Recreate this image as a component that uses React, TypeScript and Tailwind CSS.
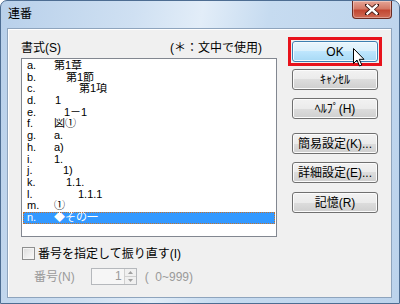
import React from 'react';

const rows = [
  { k: 'a.', t: '第1章', cls: 'pl-0' },
  { k: 'b.', t: '第1節', cls: 'pl-[12px]' },
  { k: 'c.', t: '第1項', cls: 'pl-[25px]' },
  { k: 'd.', t: '1', cls: 'pl-[1px]' },
  { k: 'e.', t: '1－1', cls: 'pl-[10px]' },
  { k: 'f.', t: '図①', cls: 'pl-0' },
  { k: 'g.', t: 'a.', cls: 'pl-0' },
  { k: 'h.', t: 'a)', cls: 'pl-0' },
  { k: 'i.', t: '1.', cls: 'pl-0' },
  { k: 'j.', t: '1)', cls: 'pl-[9px]' },
  { k: 'k.', t: '1.1.', cls: 'pl-[12px]' },
  { k: 'l.', t: '1.1.1', cls: 'pl-[24px]' },
  { k: 'm.', t: '①', cls: 'pl-0' },
  { k: 'n.', t: '◆その一', cls: 'pl-0' },
];

const btn =
  'w-[86px] h-[21px] flex items-center justify-center rounded-[3px] border border-[#707070] text-[12px] text-black shadow-[inset_0_0_0_1px_#fbfbfb] bg-[linear-gradient(#f2f2f2_0%,#ebebeb_50%,#dddddd_50%,#cfcfcf_100%)]';

const Cursor = () => (
  <svg width="12" height="19" viewBox="0 0 12 19" className="absolute left-[60px] top-[6px]">
    <path d="M0.5 0.5 L0.5 15.5 L4 12 L6.5 18 L8.8 17 L6.3 11.3 L11 11.3 Z" fill="#fff" stroke="#000" strokeWidth="1" strokeLinejoin="miter" />
  </svg>
);

export default function App() {
  return (
    <div className="w-[400px] h-[304px] flex flex-col overflow-hidden rounded-t-[7px] border border-[#4d6d92] bg-[linear-gradient(100deg,#b8d0ea_0%,#cfe0f2_30%,#e2edf8_45%,#c6dbf0_60%,#bcd3ec_100%)] font-['Liberation_Sans','Noto_Sans_CJK_JP',sans-serif]">
      {/* title bar */}
      <div className="h-[27px] flex items-start shrink-0">
        <div className="pl-[7px] pt-[5px] text-[12px] leading-[16px] text-black">連番</div>
        <div className="ml-auto mr-[7px] w-[40px] h-[18px] rounded-b-[4px] border border-t-0 border-[#6b2b22] bg-[linear-gradient(#e6a596_0%,#d47966_45%,#c24732_55%,#cf6b55_100%)] shadow-[inset_0_0_0_1px_rgba(255,255,255,0.35)] flex items-center justify-center">
          <svg width="14" height="11" viewBox="0 0 14 11">
            <path d="M2 1 L12 10 M12 1 L2 10" stroke="#3a1410" strokeWidth="4" strokeLinecap="square" />
            <path d="M2.5 1.5 L11.5 9.5 M11.5 1.5 L2.5 9.5" stroke="#fff" strokeWidth="2.4" strokeLinecap="square" />
          </svg>
        </div>
      </div>

      {/* client */}
      <div className="flex-1 ml-[6px] mr-[7px] mb-[5px] border border-[#8ea4bd] bg-[#f0f0f0] flex flex-col shadow-[inset_1px_1px_0_#ffffff]">
        <div className="flex pt-[8px]">
          {/* left column */}
          <div className="ml-[13px] w-[256px] flex flex-col">
            <div className="h-[21px] flex items-center justify-between pr-[15px] text-[12px] text-black">
              <span>書式(S)</span>
              <span>(＊：文中で使用)</span>
            </div>
            <div className="h-[179px] border border-[#828790] bg-white pt-[1px] px-[1px] text-[11px] text-black">
              {rows.map((r) => {
                const sel = r.k === 'n.';
                return (
                  <div
                    key={r.k}
                    className={`h-[11.7px] leading-[11.7px] flex overflow-hidden ${sel ? 'bg-[#3399ff] text-white outline outline-1 outline-dotted outline-[#c8722a] -outline-offset-1' : ''}`}
                  >
                    <span className="w-[31px] pl-[4px] shrink-0">{r.k}</span>
                    <span className={`whitespace-pre ${r.cls}`}>{r.t}</span>
                  </div>
                );
              })}
            </div>
            <div className="mt-[10px] h-[13px] flex items-center text-[12px] text-black">
              <div className="ml-[1px] w-[13px] h-[13px] border border-[#8e8f8f] bg-[linear-gradient(135deg,#dcdcdc,#fbfbfb)] shadow-[inset_0_0_0_1px_#f4f4f4]" />
              <span className="ml-[3px]">番号を指定して振り直す(I)</span>
            </div>
            <div className="mt-[8px] h-[17px] flex items-center text-[12px] text-[#9a9a9a]">
              <span className="ml-[13px]">番号(N)</span>
              <div className="ml-[16px] w-[46px] h-[17px] border border-[#b5b8bc] bg-[#f6f6f6] flex">
                <span className="flex-1 text-right pr-[2px] leading-[15px]">1</span>
                <div className="w-[12px] flex flex-col border-l border-[#d0d0d0]">
                  <div className="flex-1 flex items-center justify-center border-b border-[#d0d0d0] bg-[#f0f0f0]">
                    <svg width="5" height="3" viewBox="0 0 5 3"><path d="M0 3 L2.5 0 L5 3 Z" fill="#a0a0a0" /></svg>
                  </div>
                  <div className="flex-1 flex items-center justify-center bg-[#f0f0f0]">
                    <svg width="5" height="3" viewBox="0 0 5 3"><path d="M0 0 L2.5 3 L5 0 Z" fill="#a0a0a0" /></svg>
                  </div>
                </div>
              </div>
              <span className="ml-[8px] whitespace-pre">(  0~999)</span>
            </div>
          </div>

          {/* right column */}
          <div className="ml-[11px] w-[94px] flex flex-col items-center">
            <div className="w-[94px] h-[29px] border-[3px] border-[#e8121b] p-[1px]">
              <div className="relative w-[86px] h-[21px] flex items-center justify-center rounded-[3px] border border-[#3c7fb1] text-[12px] text-black shadow-[inset_0_0_0_1px_#f4fbff] bg-[linear-gradient(#eaf6fd_0%,#d9f0fc_50%,#bee6fd_50%,#a7d9f5_100%)]">
                OK
                <Cursor />
              </div>
            </div>
            <div className={`${btn} mt-[3px]`}>ｷｬﾝｾﾙ</div>
            <div className={`${btn} mt-[8px]`}>ﾍﾙﾌﾟ(H)</div>
            <div className={`${btn} mt-[14px]`}>簡易設定(K)...</div>
            <div className={`${btn} mt-[8px]`}>詳細設定(E)...</div>
            <div className={`${btn} mt-[9px]`}>記憶(R)</div>
          </div>
        </div>
      </div>
    </div>
  );
}
